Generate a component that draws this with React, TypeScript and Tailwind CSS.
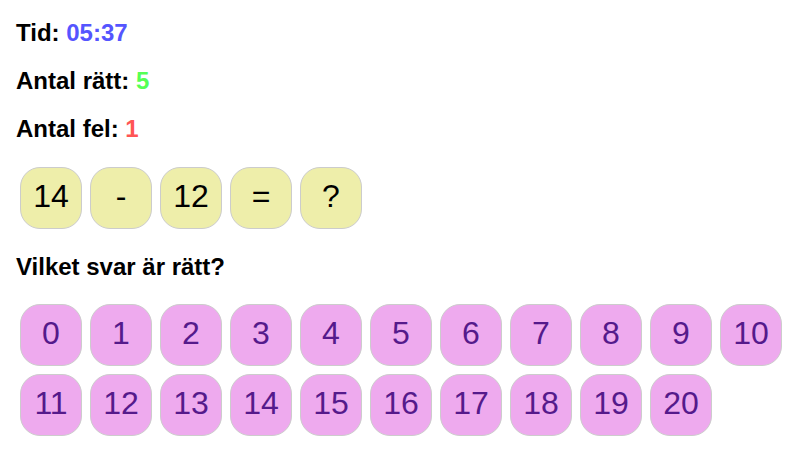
const question = ['14', '-', '12', '=', '?'];
const answers = Array.from({ length: 21 }, (_, n) => n);

const tile =
  'flex h-[62px] w-[62px] items-center justify-center rounded-[20px] border border-[#cccccc] pb-1 text-[32px] leading-9';

export default function App() {
  return (
    <main className="bg-white px-4 py-[19px] font-['Liberation_Sans',Arial,sans-serif] text-black">
      <section className="flex flex-col gap-5 text-2xl leading-7 font-bold">
        <p>
          Tid: <span className="text-[#5555ff]">05:37</span>
        </p>
        <p>
          Antal rätt: <span className="text-[#55ff55]">5</span>
        </p>
        <p>
          Antal fel: <span className="text-[#ff5555]">1</span>
        </p>
      </section>
      <div className="mt-6 flex flex-wrap gap-2 px-1">
        {question.map((part, i) => (
          <div key={i} className={`${tile} bg-[#eeeeaa]`}>
            {part}
          </div>
        ))}
      </div>
      <h2 className="mt-6 text-2xl leading-7 font-bold">Vilket svar är rätt?</h2>
      <nav className="mt-[23px] flex flex-wrap gap-2 pl-1">
        {answers.map((n) => (
          <a key={n} href={`#${n}`} className={`${tile} bg-[#eeaaee] text-[#551a8b]`}>
            {n}
          </a>
        ))}
      </nav>
    </main>
  );
}
